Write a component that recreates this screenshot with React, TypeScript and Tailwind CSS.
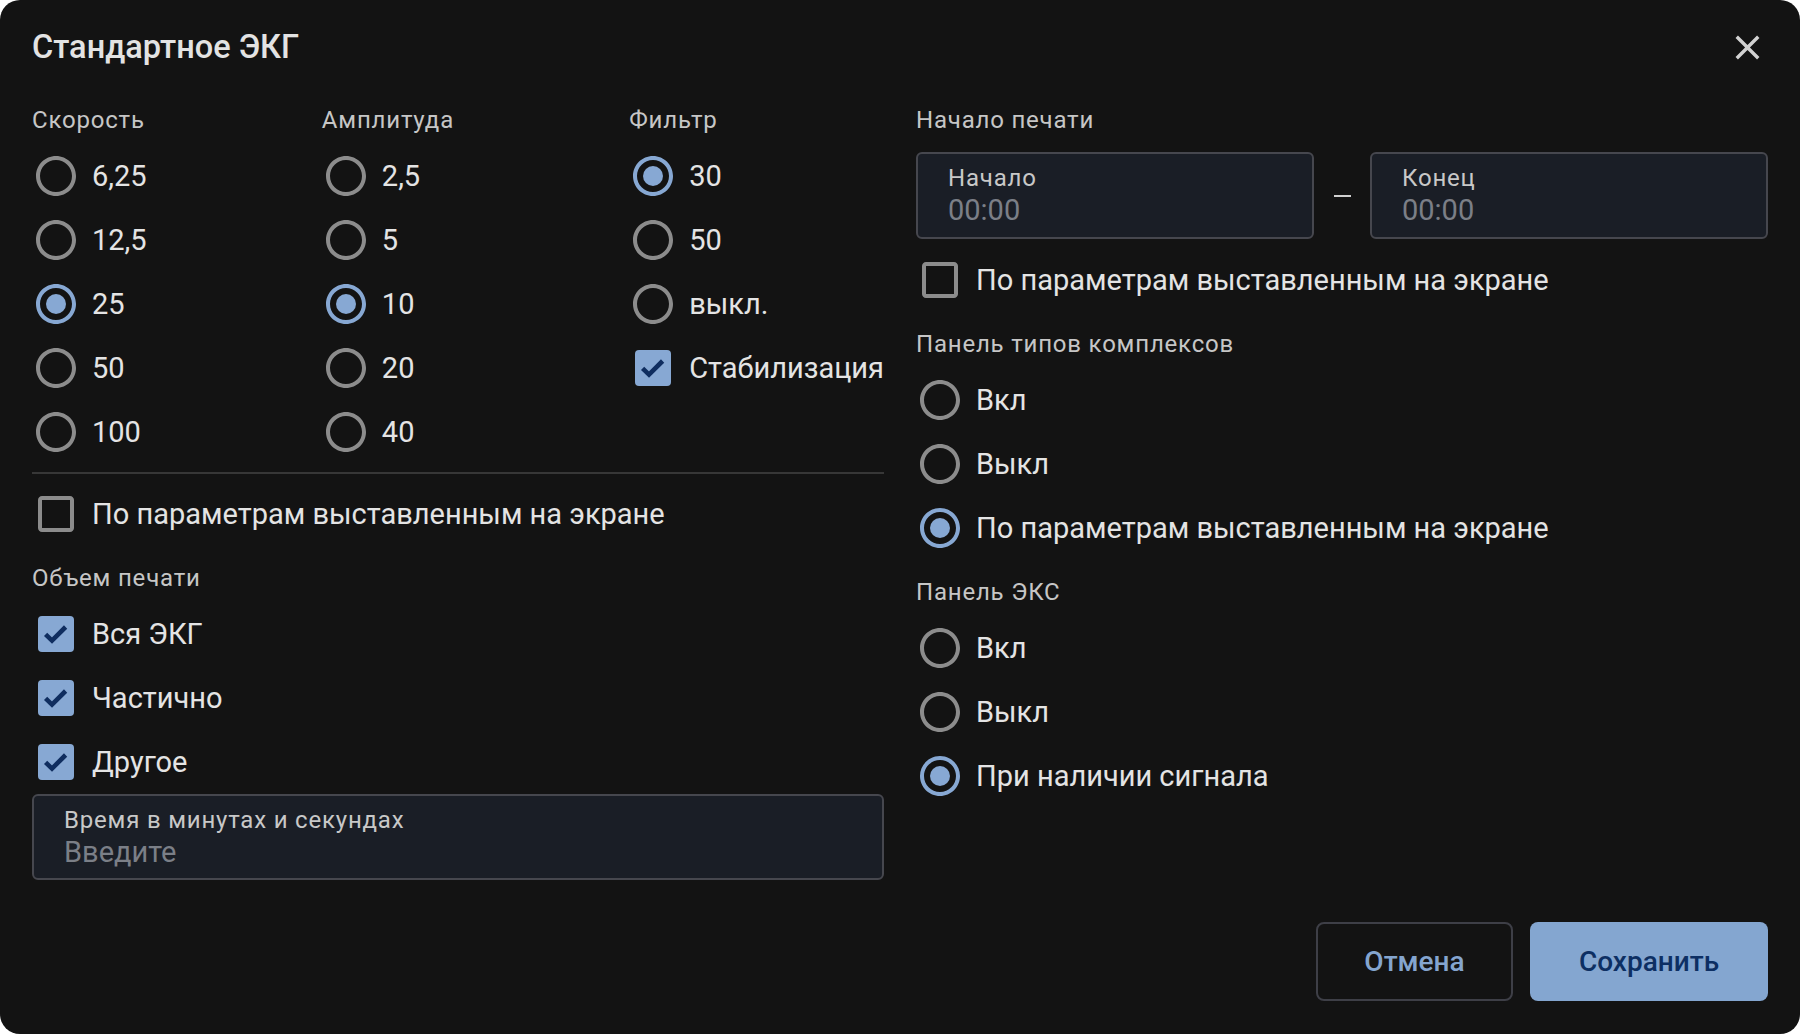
import React from "react";

const RadioIcon = ({ checked }: { checked: boolean }) => (
  <svg viewBox="0 0 24 24" className="h-12 w-12 shrink-0" fill={checked ? "#87a8d3" : "#8c8c8c"}>
    <path d="M12 2C6.48 2 2 6.48 2 12s4.48 10 10 10 10-4.48 10-10S17.52 2 12 2zm0 18c-4.42 0-8-3.58-8-8s3.58-8 8-8 8 3.58 8 8-3.58 8-8 8z" />
    {checked && <circle cx="12" cy="12" r="5" />}
  </svg>
);

const CheckIcon = ({ checked }: { checked: boolean }) =>
  checked ? (
    <svg viewBox="0 0 24 24" className="h-12 w-12 shrink-0">
      <rect x="3" y="3" width="18" height="18" rx="2" fill="#87a8d3" />
      <polyline points="6.8,12.2 10,15.3 16.8,8.5" fill="none" stroke="#0f2d5f" strokeWidth="2.3" />
    </svg>
  ) : (
    <svg viewBox="0 0 24 24" className="h-12 w-12 shrink-0" fill="#8c8c8c">
      <path d="M19 5v14H5V5h14m0-2H5c-1.1 0-2 .9-2 2v14c0 1.1.9 2 2 2h14c1.1 0 2-.9 2-2V5c0-1.1-.9-2-2-2z" />
    </svg>
  );

const Radio = ({ label, checked = false }: { label: string; checked?: boolean }) => (
  <div className="flex h-16 items-center">
    <RadioIcon checked={checked} />
    <span className="ml-3 text-[29px] leading-none text-[#e4e4e4]">{label}</span>
  </div>
);

const Check = ({ label, checked = false }: { label: string; checked?: boolean }) => (
  <div className="flex h-16 items-center">
    <CheckIcon checked={checked} />
    <span className="ml-3 text-[29px] leading-none text-[#e4e4e4]">{label}</span>
  </div>
);

const Label = ({ children, className = "" }: { children: React.ReactNode; className?: string }) => (
  <div className={`flex h-12 items-center text-[24px] tracking-[0.8px] text-[#c6c6c6] ${className}`}>
    {children}
  </div>
);

const Field = ({ label, placeholder, className = "" }: { label: string; placeholder: string; className?: string }) => (
  <div
    className={`flex flex-col justify-center rounded-[6px] border-2 border-[#46474e] bg-[#1a1e26] pl-[30px] ${className}`}
  >
    <div className="h-[30px] text-[24px] leading-[30px] tracking-[0.8px] text-[#c8c8c8]">{label}</div>
    <div className="h-[35px] text-[29px] leading-[35px] text-[#7b7f87]">{placeholder}</div>
  </div>
);

export default function App() {
  return (
    <div className="min-h-screen bg-white font-['Roboto',sans-serif]">
      <div className="flex h-[1034px] flex-col rounded-[20px] bg-[#131313] px-8 pb-[33px]">
        {/* Header */}
        <div className="flex h-[94px] items-center justify-between">
          <h1 className="text-[32.5px] font-medium text-[#e3e3e3]">Стандартное ЭКГ</h1>
          <button className="h-[41px] w-[41px]">
            <svg viewBox="0 0 24 24" className="h-[41px] w-[41px]" fill="#d2d2d2">
              <path d="M19 6.41 17.59 5 12 10.59 6.41 5 5 6.41 10.59 12 5 17.59 6.41 19 12 13.41 17.59 19 19 17.59 13.41 12z" />
            </svg>
          </button>
        </div>

        <div className="mt-[2px] grid grid-cols-2 gap-x-8">
          {/* Left column */}
          <div className="flex flex-col">
            <div className="flex justify-between">
              <div>
                <Label>Скорость</Label>
                <Radio label="6,25" />
                <Radio label="12,5" />
                <Radio label="25" checked />
                <Radio label="50" />
                <Radio label="100" />
              </div>
              <div>
                <Label>Амплитуда</Label>
                <Radio label="2,5" />
                <Radio label="5" />
                <Radio label="10" checked />
                <Radio label="20" />
                <Radio label="40" />
              </div>
              <div>
                <Label>Фильтр</Label>
                <Radio label="30" checked />
                <Radio label="50" />
                <Radio label="выкл." />
                <Check label="Стабилизация" checked />
              </div>
            </div>
            <div className="mt-2 h-[2px] bg-[#373737]" />
            <div className="mt-2">
              <Check label="По параметрам выставленным на экране" />
            </div>
            <Label className="mt-2">Объем печати</Label>
            <Check label="Вся ЭКГ" checked />
            <Check label="Частично" checked />
            <Check label="Другое" checked />
            <Field label="Время в минутах и секундах" placeholder="Введите" className="h-[86px]" />
          </div>

          {/* Right column */}
          <div className="flex flex-col">
            <Label>Начало печати</Label>
            <div className="mt-2 flex items-center">
              <Field label="Начало" placeholder="00:00" className="h-[87px] flex-1" />
              <div className="flex w-14 justify-center">
                <div className="h-[2px] w-[17px] bg-[#d0d0d0]" />
              </div>
              <Field label="Конец" placeholder="00:00" className="h-[87px] flex-1" />
            </div>
            <div className="mt-[9px]">
              <Check label="По параметрам выставленным на экране" />
            </div>
            <Label className="mt-2">Панель типов комплексов</Label>
            <Radio label="Вкл" />
            <Radio label="Выкл" />
            <Radio label="По параметрам выставленным на экране" checked />
            <Label className="mt-2">Панель ЭКС</Label>
            <Radio label="Вкл" />
            <Radio label="Выкл" />
            <Radio label="При наличии сигнала" checked />
          </div>
        </div>

        {/* Footer */}
        <div className="mt-[42px] flex justify-end gap-[17px]">
          <button className="h-[79px] w-[197px] rounded-[8px] border-2 border-[#3e3f47] text-[28px] font-medium text-[#84a5cf]">
            Отмена
          </button>
          <button className="h-[79px] w-[238px] rounded-[8px] bg-[#84a6d0] text-[28px] font-medium text-[#0d2f63]">
            Сохранить
          </button>
        </div>
      </div>
    </div>
  );
}
